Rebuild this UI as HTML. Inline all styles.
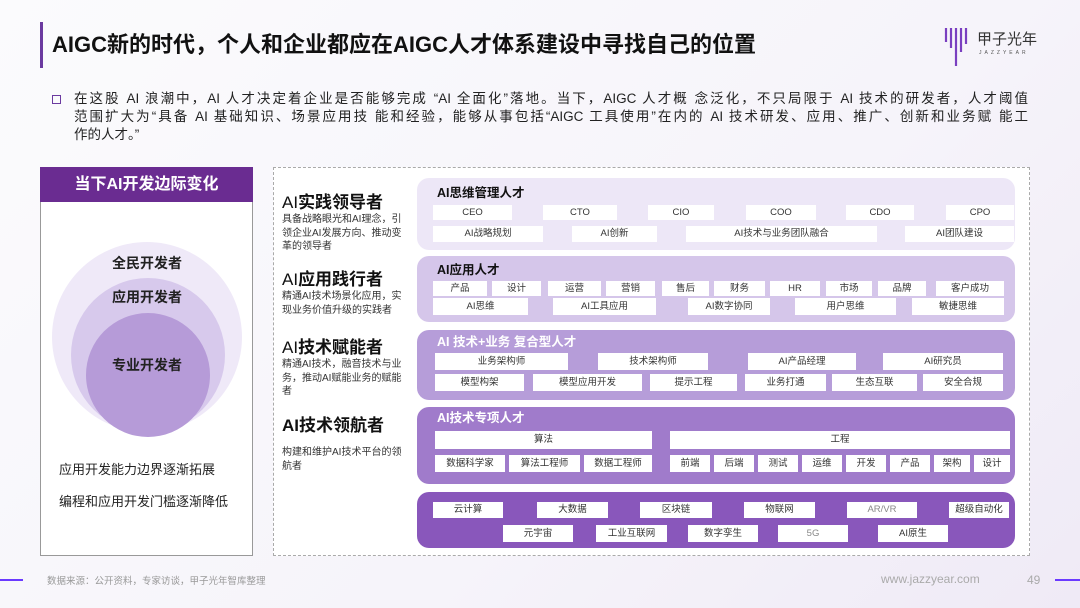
<!DOCTYPE html>
<html><head><meta charset="utf-8">
<style>
*{margin:0;padding:0;box-sizing:border-box}
body{width:1080px;height:608px;overflow:hidden;position:relative;font-family:"Liberation Sans","Noto Sans CJK SC",sans-serif;background:linear-gradient(135deg,#fbfbfd 0%,#f6f4fa 60%,#efeaf6 100%);color:#222;line-height:1.2}
.a{position:absolute}
.t{white-space:nowrap}
.row{position:absolute;left:417px;width:598px;border-radius:12px}
.rt{position:absolute;left:20px;font-size:12.5px;line-height:16px;font-weight:bold;white-space:nowrap}
.c{position:absolute;background:#fff;font-size:9.5px;color:#333;text-align:center;white-space:nowrap;display:flex;align-items:center;justify-content:center}
.lh{position:absolute;left:282px;font-size:17px;line-height:20px;white-space:nowrap;color:#111}
.lh b{font-weight:bold}
.ld{position:absolute;left:282px;font-size:10px;line-height:13.5px;color:#333;width:128px}
.pl{position:absolute;left:74px;width:954px;font-size:13.5px;line-height:18px;white-space:nowrap;text-align:justify;text-align-last:justify}
</style></head><body>
<div class="a" style="left:40px;top:22px;width:3px;height:46px;background:#6b3aa0"></div>
<div class="a t" style="left:52px;top:31px;font-size:22px;line-height:28px;font-weight:bold;color:#111">AIGC新的时代，个人和企业都应在AIGC人才体系建设中寻找自己的位置</div>
<svg class="a" style="left:943px;top:26px" width="30" height="44"><g stroke="#7a3fc0" stroke-width="2.2"><line x1="3" y1="2" x2="3" y2="16"/><line x1="8" y1="2" x2="8" y2="22"/><line x1="13" y1="2" x2="13" y2="40"/><line x1="18" y1="2" x2="18" y2="26"/><line x1="23" y1="2" x2="23" y2="18"/></g></svg>
<div class="a t" style="left:977px;top:31px;font-size:15px;line-height:18px;color:#333">甲子光年</div>
<div class="a t" style="left:979px;top:50px;font-size:5px;letter-spacing:3px;color:#555">JAZZYEAR</div>

<div class="a" style="left:52px;top:95px;width:9px;height:9px;border:1.5px solid #6b3aa0"></div>
<div class="pl" style="top:90px">在这股 AI 浪潮中，AI 人才决定着企业是否能够完成 “AI 全面化”落地。当下，AIGC 人才概 念泛化，不只局限于 AI 技术的研发者，人才阈值</div>
<div class="pl" style="top:108px">范围扩大为“具备 AI 基础知识、场景应用技 能和经验，能够从事包括“AIGC 工具使用”在内的 AI 技术研发、应用、推广、创新和业务赋 能工</div>
<div class="pl" style="top:126px;text-align-last:left;text-align:left">作的人才。”</div>

<div class="a" style="left:40px;top:167px;width:213px;height:389px;background:#fff;border:1px solid #999"></div>
<div class="a" style="left:40px;top:167px;width:213px;height:35px;background:#6a2c91;color:#fff;font-size:16px;font-weight:bold;text-align:center;line-height:35px">当下AI开发边际变化</div>
<div class="a" style="left:52px;top:242px;width:190px;height:190px;border-radius:50%;background:#efe9f8"></div>
<div class="a" style="left:71px;top:278px;width:154px;height:154px;border-radius:50%;background:#d7c9ec"></div>
<div class="a" style="left:86px;top:313px;width:124px;height:124px;border-radius:50%;background:#b69bd8"></div>
<div class="a t" style="left:112px;top:254px;font-size:14px;line-height:18px;font-weight:bold">全民开发者</div>
<div class="a t" style="left:112px;top:288px;font-size:14px;line-height:18px;font-weight:bold">应用开发者</div>
<div class="a t" style="left:112px;top:356px;font-size:14px;line-height:18px;font-weight:bold">专业开发者</div>
<div class="a t" style="left:59px;top:461px;font-size:13px;line-height:17px">应用开发能力边界逐渐拓展</div>
<div class="a t" style="left:59px;top:493px;font-size:13px;line-height:17px">编程和应用开发门槛逐渐降低</div>

<div class="a" style="left:273px;top:167px;width:757px;height:389px;background:#fff;border:1px dashed #aaa"></div>

<div class="lh" style="top:193px">AI<b>实践领导者</b></div>
<div class="ld" style="top:213px">具备战略眼光和AI理念，引领企业AI发展方向、推动变革的领导者</div>
<div class="lh" style="top:270px">AI<b>应用践行者</b></div>
<div class="ld" style="top:290px">精通AI技术场景化应用，实现业务价值升级的实践者</div>
<div class="lh" style="top:338px">AI<b>技术赋能者</b></div>
<div class="ld" style="top:358px">精通AI技术，融音技术与业务，推动AI赋能业务的赋能者</div>
<div class="lh" style="top:416px"><b>AI技术领航者</b></div>
<div class="ld" style="top:446px">构建和维护AI技术平台的领航者</div>

<div class="row" style="top:178px;height:72px;background:#ede7f7">
<div class="rt" style="top:7px;color:#111">AI思维管理人才</div></div>
<div class="row" style="top:256px;height:66px;background:#d5c6ea">
<div class="rt" style="top:6px;color:#111">AI应用人才</div></div>
<div class="row" style="top:330px;height:70px;background:#b69dd9">
<div class="rt" style="top:4px;color:#fff">AI 技术+业务 复合型人才</div></div>
<div class="row" style="top:407px;height:77px;background:#a07bcb">
<div class="rt" style="top:3px;color:#fff">AI技术专项人才</div></div>
<div class="row" style="top:492px;height:56px;background:#8957bb"></div>

<!-- row1 -->
<div class="c" style="left:433px;top:205px;width:79px;height:15px">CEO</div>
<div class="c" style="left:543px;top:205px;width:74px;height:15px">CTO</div>
<div class="c" style="left:648px;top:205px;width:66px;height:15px">CIO</div>
<div class="c" style="left:746px;top:205px;width:70px;height:15px">COO</div>
<div class="c" style="left:846px;top:205px;width:68px;height:15px">CDO</div>
<div class="c" style="left:946px;top:205px;width:68px;height:15px">CPO</div>
<div class="c" style="left:433px;top:226px;width:110px;height:16px">AI战略规划</div>
<div class="c" style="left:572px;top:226px;width:85px;height:16px">AI创新</div>
<div class="c" style="left:686px;top:226px;width:191px;height:16px">AI技术与业务团队融合</div>
<div class="c" style="left:905px;top:226px;width:109px;height:16px">AI团队建设</div>
<!-- row2 -->
<div class="c" style="left:433px;top:281px;width:54px;height:15px">产品</div>
<div class="c" style="left:492px;top:281px;width:49px;height:15px">设计</div>
<div class="c" style="left:548px;top:281px;width:53px;height:15px">运营</div>
<div class="c" style="left:606px;top:281px;width:49px;height:15px">营销</div>
<div class="c" style="left:662px;top:281px;width:47px;height:15px">售后</div>
<div class="c" style="left:714px;top:281px;width:51px;height:15px">财务</div>
<div class="c" style="left:770px;top:281px;width:50px;height:15px">HR</div>
<div class="c" style="left:826px;top:281px;width:46px;height:15px">市场</div>
<div class="c" style="left:878px;top:281px;width:48px;height:15px">品牌</div>
<div class="c" style="left:936px;top:281px;width:68px;height:15px">客户成功</div>
<div class="c" style="left:433px;top:298px;width:95px;height:17px">AI思维</div>
<div class="c" style="left:553px;top:298px;width:103px;height:17px">AI工具应用</div>
<div class="c" style="left:688px;top:298px;width:82px;height:17px">AI数字协同</div>
<div class="c" style="left:795px;top:298px;width:101px;height:17px">用户思维</div>
<div class="c" style="left:912px;top:298px;width:92px;height:17px">敏捷思维</div>
<!-- row3 -->
<div class="c" style="left:435px;top:353px;width:133px;height:17px">业务架构师</div>
<div class="c" style="left:598px;top:353px;width:110px;height:17px">技术架构师</div>
<div class="c" style="left:748px;top:353px;width:108px;height:17px">AI产品经理</div>
<div class="c" style="left:883px;top:353px;width:120px;height:17px">AI研究员</div>
<div class="c" style="left:435px;top:374px;width:89px;height:17px">模型构架</div>
<div class="c" style="left:533px;top:374px;width:109px;height:17px">模型应用开发</div>
<div class="c" style="left:650px;top:374px;width:87px;height:17px">提示工程</div>
<div class="c" style="left:745px;top:374px;width:81px;height:17px">业务打通</div>
<div class="c" style="left:832px;top:374px;width:85px;height:17px">生态互联</div>
<div class="c" style="left:923px;top:374px;width:80px;height:17px">安全合规</div>
<!-- row4 -->
<div class="c" style="left:435px;top:431px;width:217px;height:18px">算法</div>
<div class="c" style="left:670px;top:431px;width:340px;height:18px">工程</div>
<div class="c" style="left:435px;top:455px;width:70px;height:17px">数据科学家</div>
<div class="c" style="left:509px;top:455px;width:71px;height:17px">算法工程师</div>
<div class="c" style="left:584px;top:455px;width:68px;height:17px">数据工程师</div>
<div class="c" style="left:670px;top:455px;width:40px;height:17px">前端</div>
<div class="c" style="left:714px;top:455px;width:40px;height:17px">后端</div>
<div class="c" style="left:758px;top:455px;width:40px;height:17px">测试</div>
<div class="c" style="left:802px;top:455px;width:40px;height:17px">运维</div>
<div class="c" style="left:846px;top:455px;width:40px;height:17px">开发</div>
<div class="c" style="left:890px;top:455px;width:40px;height:17px">产品</div>
<div class="c" style="left:934px;top:455px;width:36px;height:17px">架构</div>
<div class="c" style="left:974px;top:455px;width:36px;height:17px">设计</div>
<!-- row5 -->
<div class="c" style="left:433px;top:502px;width:70px;height:16px">云计算</div>
<div class="c" style="left:537px;top:502px;width:71px;height:16px">大数据</div>
<div class="c" style="left:640px;top:502px;width:72px;height:16px">区块链</div>
<div class="c" style="left:744px;top:502px;width:71px;height:16px">物联网</div>
<div class="c" style="left:847px;top:502px;width:70px;height:16px;color:#888">AR/VR</div>
<div class="c" style="left:949px;top:502px;width:60px;height:16px">超级自动化</div>
<div class="c" style="left:503px;top:525px;width:70px;height:17px">元宇宙</div>
<div class="c" style="left:596px;top:525px;width:71px;height:17px">工业互联网</div>
<div class="c" style="left:688px;top:525px;width:70px;height:17px">数字孪生</div>
<div class="c" style="left:778px;top:525px;width:70px;height:17px;color:#888">5G</div>
<div class="c" style="left:878px;top:525px;width:70px;height:17px">AI原生</div>

<div class="a" style="left:0;top:579px;width:23px;height:2px;background:#6b3aff"></div>
<div class="a t" style="left:47px;top:576px;font-size:9.5px;line-height:12px;color:#999">数据来源：公开资料，专家访谈，甲子光年智库整理</div>
<div class="a t" style="left:881px;top:572px;font-size:12px;line-height:14px;color:#aaa">www.jazzyear.com</div>
<div class="a t" style="left:1027px;top:573px;font-size:12px;line-height:14px;color:#aaa">49</div>
<div class="a" style="left:1055px;top:579px;width:25px;height:2px;background:#6b3aff"></div>
</body></html>
